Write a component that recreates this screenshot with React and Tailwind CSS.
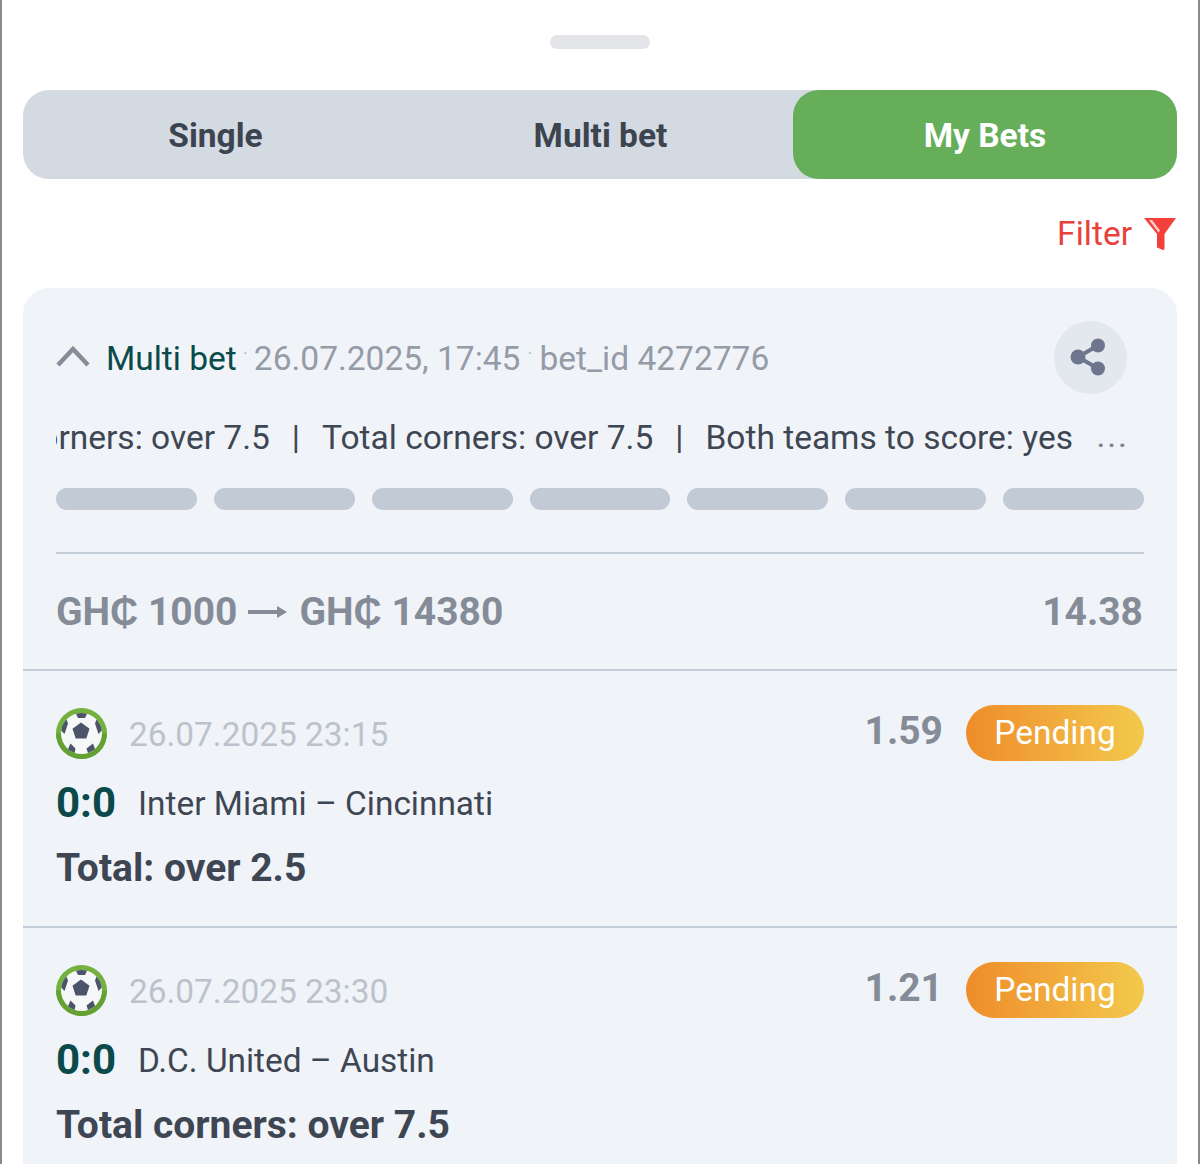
const segments = [0, 1, 2, 3, 4, 5, 6];

const matches = [
  { date: "26.07.2025 23:15", odds: "1.59", teams: "Inter Miami – Cincinnati", market: "Total: over 2.5" },
  { date: "26.07.2025 23:30", odds: "1.21", teams: "D.C. United – Austin", market: "Total corners: over 7.5" },
];

function BallIcon() {
  return (
    <svg width="51" height="51" viewBox="0 0 51 51" className="shrink-0">
      <circle cx="25.5" cy="25.5" r="25.5" fill="#74b13f" />
      <path d="M25.5 51A25.5 25.5 0 0 0 51 25.5h-5A20.500 20.500 0 0 1 5 25.5H0A25.5 25.5 0 0 0 25.5 51z" fill="#64a032" />
      <circle cx="25.5" cy="25.5" r="20.5" fill="#f6f7f9" />
      <path d="M25 14.500l8.500 6.200-3.200 9.800H19.700l-3.200-9.800z" fill="#4b5468" />
      <path d="M20 5.800a20.500 20.500 0 0 1 11 0l-2 4.200h-7z" fill="#4b5468" />
      <path d="M10.500 11.500a20.500 20.500 0 0 0-5.300 11l3.300 3.500 3.500-10.500z" fill="#4b5468" />
      <path d="M40.500 11.500a20.500 20.500 0 0 1 5.300 11l-3.300 3.500-3.500-10.500z" fill="#4b5468" />
      <path d="M12 41a20.500 20.500 0 0 0 6.500 4l1-4.500-5-5z" fill="#4b5468" />
      <path d="M39 41a20.500 20.500 0 0 1-7 4l-1.500-4.500 6.500-5z" fill="#4b5468" />
    </svg>
  );
}

function Separator() {
  return <span className="mx-[22px]">|</span>;
}

function MatchRow({ match }) {
  return (
    <div className="border-t-2 border-[#c5ccd9] px-[33px] h-[257px] pt-[34px]">
      <div className="flex items-center h-[56px]">
        <BallIcon />
        <span className="ml-[22px] text-[33.400px] text-[#bcc2cc] mt-[2px] pt-[2px]">{match.date}</span>
        <span className="ml-auto text-[39px] font-bold text-[#858c98] -mt-[4px]">{match.odds}</span>
        <span className="ml-[23px] w-[178px] h-[56px] pt-[1px] rounded-full bg-gradient-to-r from-[#ee8c2a] to-[#f2c94c] flex items-center justify-center text-[33.500px] text-white">
          Pending
        </span>
      </div>
      <div className="flex items-center mt-[15px] h-[52px]">
        <span className="text-[42px] font-bold text-[#0a4a4a]">0:0</span>
        <span className="ml-[22px] text-[33.400px] text-[#3f4653] mt-[4px]">{match.teams}</span>
      </div>
      <div className="mt-[14px] text-[39px] font-bold text-[#3f4653] leading-[52px]">{match.market}</div>
    </div>
  );
}

export default function App() {
  return (
    <div className="w-[1200px] h-[1164px] overflow-hidden bg-white border-x-2 border-[#8a8a8a] font-['Roboto',sans-serif] px-[21px]">
      {/* Drag handle */}
      <div className="pt-[35px] flex justify-center">
        <div className="w-[100px] h-[14px] rounded-full bg-[#e3e5e8]" />
      </div>

      {/* Tabs */}
      <div className="mt-[41px] h-[89px] rounded-[26px] bg-[#d4dae2] flex text-[33.500px] font-bold">
        <div className="flex-1 flex items-center justify-center pt-[4px] text-[#3c4450]">Single</div>
        <div className="flex-1 flex items-center justify-center pt-[4px] text-[#3c4450]">Multi bet</div>
        <div className="w-[384px] flex items-center justify-center pt-[4px] rounded-[26px] bg-[#66ae5a] text-white">My Bets</div>
      </div>

      {/* Filter */}
      <div className="flex items-center justify-end h-[109px] gap-[12px] pr-[1px]">
        <span className="text-[33.500px] text-[#e8413c] pt-[1px]">Filter</span>
        <svg width="32" height="33" viewBox="0 0 32 33">
          <path d="M0 1h32L20.500 17v14.500q0 1.500-1.500 1.500l-6-2.500V17z" fill="#f4403a" />
          <path d="M5 3h3l8 10.500-1.500 2z" fill="#fbd2cf" />
        </svg>
      </div>

      {/* Bet card */}
      <div className="rounded-t-[26px] bg-[#f0f4f9] h-[900px]">
        <div className="px-[33px] pt-[33px]">
          <div className="flex items-center h-[72px]">
            <svg width="34" height="22" viewBox="0 0 34 22" className="shrink-0 -mt-[2px]">
              <path d="M2 20L17 4l15 16" fill="none" stroke="#868d99" strokeWidth="4.500" />
            </svg>
            <span className="ml-[16px] pt-[4px] text-[33.500px] text-[#0a4a4a]">Multi bet</span>
            <span className="w-[17px] text-center text-[16px] text-[#a0a6b1] -mt-[6px]">·</span>
            <span className="pt-[4px] text-[33.500px] text-[#959ba7]">26.07.2025, 17:45</span>
            <span className="w-[19px] text-center text-[16px] text-[#a0a6b1] -mt-[6px]">·</span>
            <span className="pt-[4px] text-[33.500px] text-[#959ba7]">bet_id 4272776</span>
            <div className="ml-auto mr-[17px] w-[73px] h-[73px] rounded-full bg-[#e3e7ee] flex items-center justify-center">
              <svg width="38" height="38" viewBox="0 0 38 38" className="-ml-[5px]">
                <path d="M29 7.500L9 19l20 11.500" fill="none" stroke="#6d768c" strokeWidth="4" />
                <circle cx="29" cy="7.500" r="7" fill="#6d768c" />
                <circle cx="9" cy="19" r="7.500" fill="#6d768c" />
                <circle cx="29" cy="30.500" r="7" fill="#6d768c" />
              </svg>
            </div>
          </div>

          {/* Ticker */}
          <div className="flex items-center mt-[8px] h-[72px] pt-[2px]">
            <div className="w-[1017px] overflow-hidden flex justify-end">
              <span className="shrink-0 whitespace-pre text-[33.500px] text-[#3f4653]">
                Total corners: over 7.5<Separator />Total corners: over 7.5<Separator />Both teams to score: yes
              </span>
            </div>
            <span className="ml-[24px] text-[28px] font-medium tracking-[3px] text-[#7a818d]">...</span>
          </div>

          {/* Progress segments */}
          <div className="flex gap-[17px] mt-[15px]">
            {segments.map((s) => (
              <div key={s} className="flex-1 h-[22px] rounded-full bg-[#c2cad6]" />
            ))}
          </div>

          <div className="mt-[42px] border-t-2 border-[#c5ccd9] flex items-center h-[117px] pt-[1px] text-[39px] font-bold text-[#858c98]">
            <span>GH₵ 1000</span>
            <svg width="40" height="14" viewBox="0 0 40 14" className="ml-[11px] mr-[11px]">
              <path d="M0 7h30" stroke="#858c98" strokeWidth="4" strokeLinecap="round" />
              <path d="M29 1l10 6-10 6z" fill="#858c98" />
            </svg>
            <span>GH₵ 14380</span>
            <span className="ml-auto mr-[1px]">14.38</span>
          </div>
        </div>

        {matches.map((m) => (
          <MatchRow key={m.date} match={m} />
        ))}
      </div>
    </div>
  );
}
